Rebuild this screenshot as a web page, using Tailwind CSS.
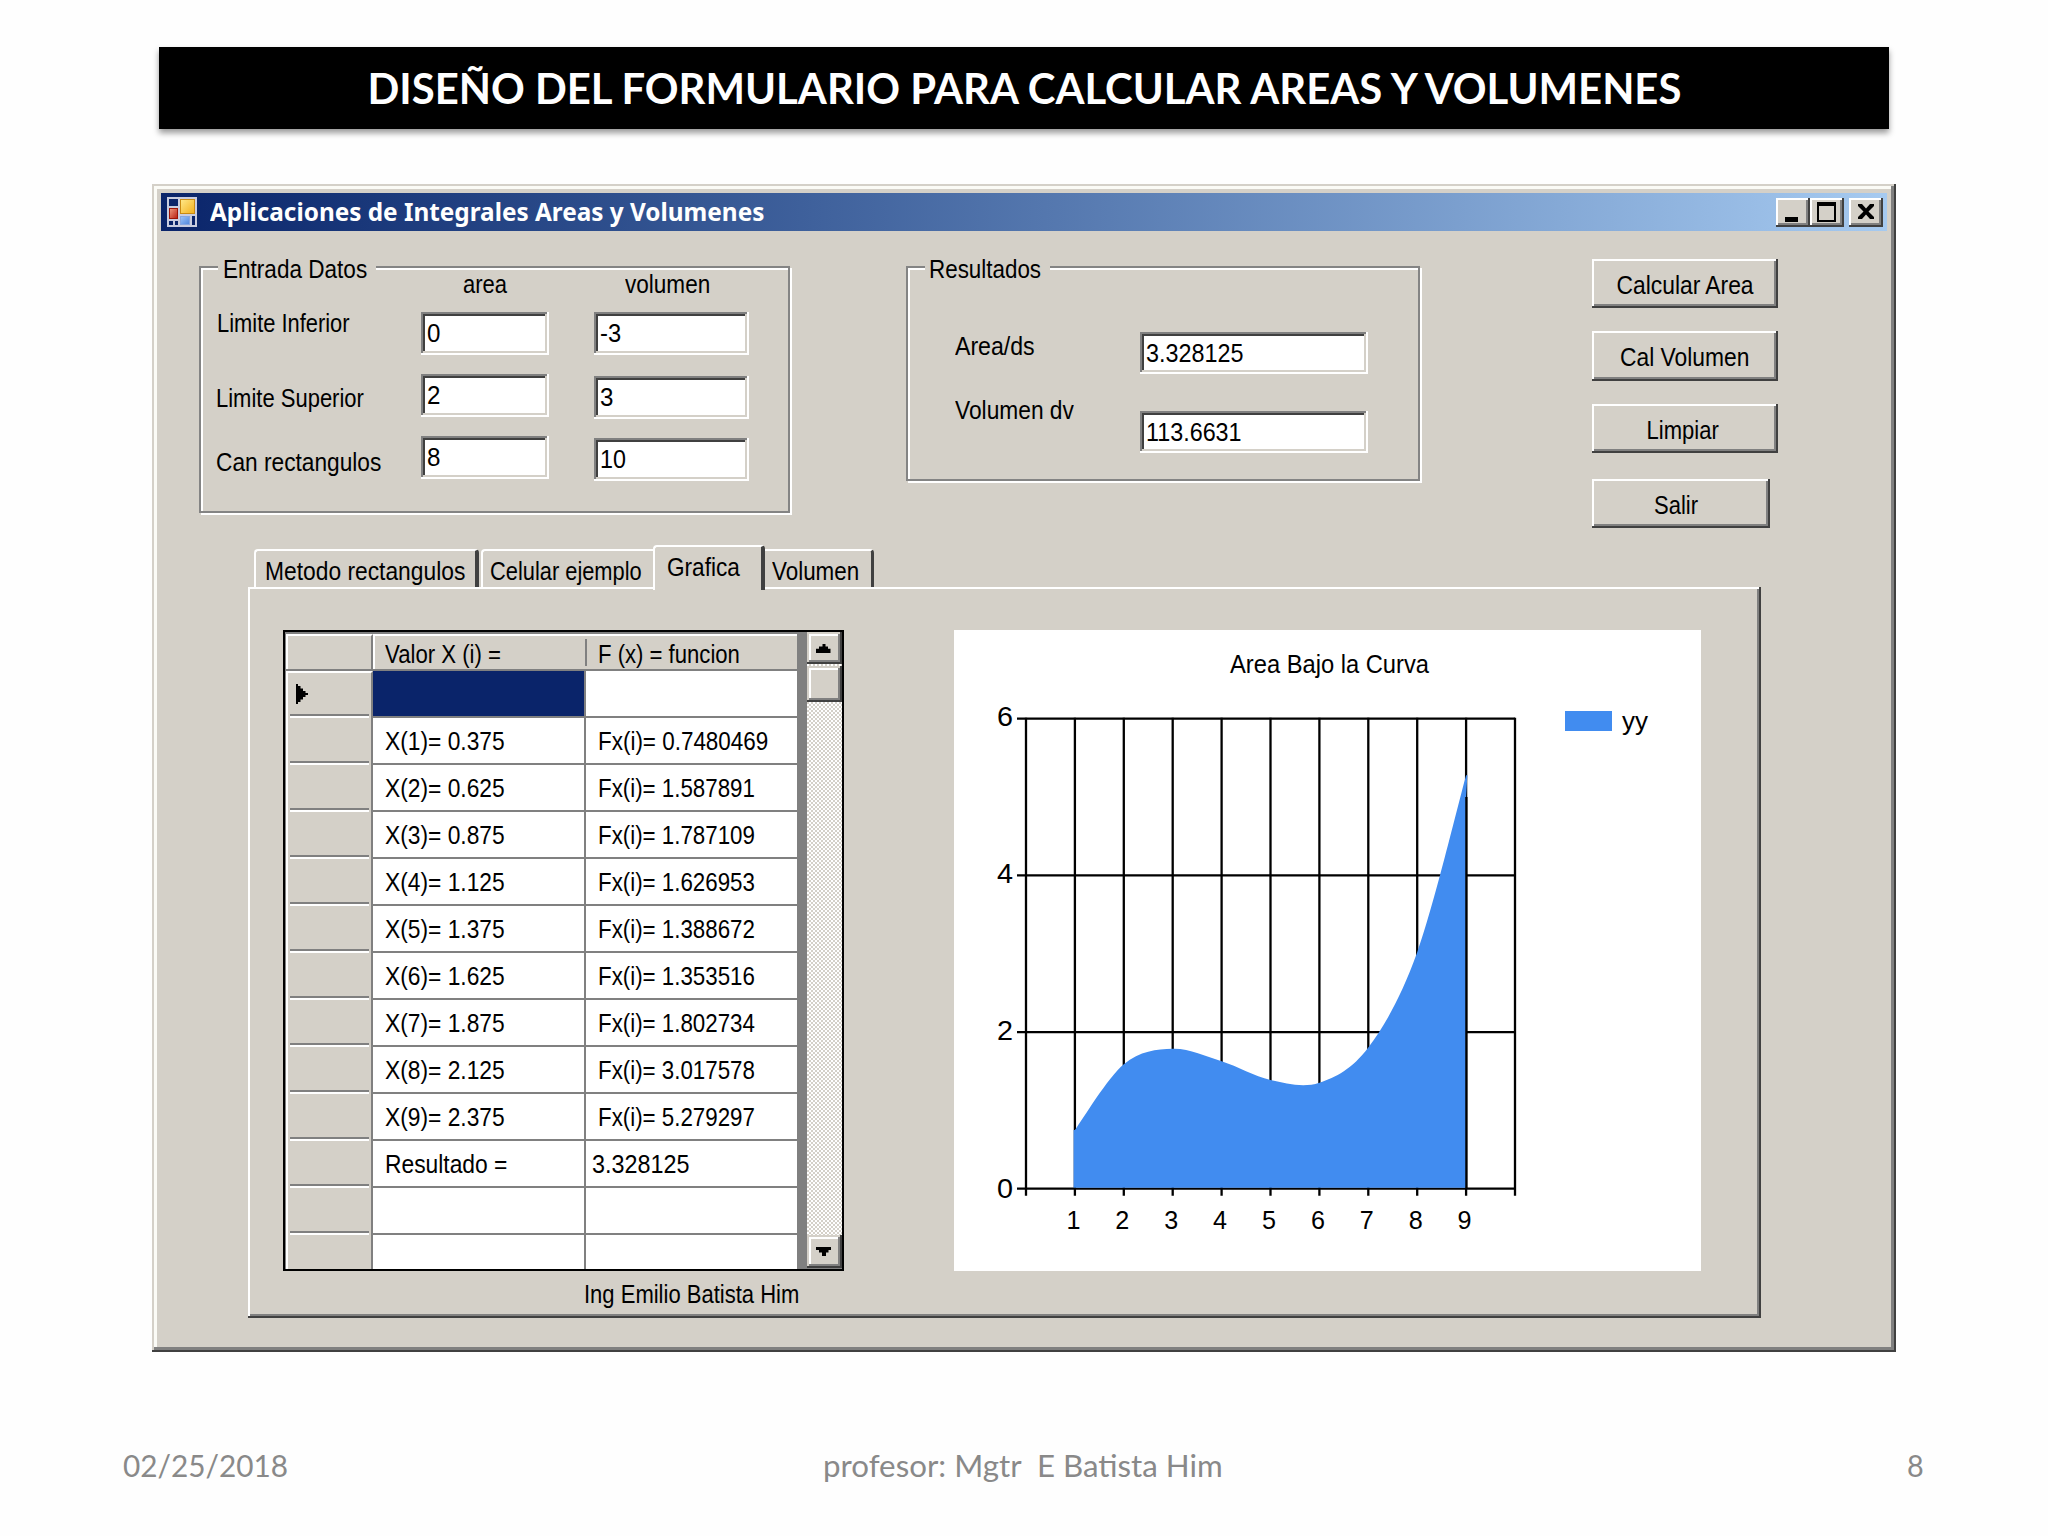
<!DOCTYPE html>
<html lang="es">
<head>
    <meta charset="UTF-8">
    <meta name="viewport" content="width=device-width, initial-scale=1.0">
    <title>Aplicaciones de Integrales Areas y Volumenes</title>
    <script src="https://cdn.jsdelivr.net/npm/@tailwindcss/browser@4"></script>
</head>
<body class="bg-[#fefefe]">
    <div class="w-[2048px] h-[1536px] overflow-hidden flex flex-col font-['Liberation_Sans',sans-serif] text-[26px] leading-[26px] text-black">

        <!-- Slide title -->
        <h1 class="mt-[47px] ml-[159px] w-[1730px] h-[82px] shrink-0 bg-black flex justify-center pt-[20px] shadow-[0_4px_6px_rgba(0,0,0,0.4)] font-['Lato',sans-serif] font-bold text-[42.5px] leading-[42px] text-white">
            <span data-w="1314" class="inline-block whitespace-nowrap">DISEÑO DEL FORMULARIO PARA CALCULAR AREAS Y VOLUMENES</span>
        </h1>

        <!-- Window -->
        <main class="mt-[55px] ml-[152px] w-[1744px] h-[1168px] shrink-0 p-[9px] bg-[#d4d0c8] shadow-[inset_-2px_-2px_#404040,inset_2px_2px_#d4d0c8,inset_-5px_-5px_#808080,inset_5px_5px_#fbfbf6]">
            <header class="w-[1726px] h-[38px] bg-linear-to-r from-[#0a246a] to-[#a6caf0] flex items-center pl-[6px] pr-[4px]">
                <svg class="w-[30px] h-[30px] shrink-0" viewBox="0 0 30 30">
                    <defs>
                        <linearGradient id="gold" x1="0" y1="0" x2="1" y2="1"><stop offset="0" stop-color="#ffe98a"/><stop offset="1" stop-color="#f2b01c"/></linearGradient>
                        <linearGradient id="red" x1="0" y1="0" x2="1" y2="1"><stop offset="0" stop-color="#f09a80"/><stop offset="1" stop-color="#b81d10"/></linearGradient>
                        <linearGradient id="sky" x1="0" y1="0" x2="1" y2="1"><stop offset="0" stop-color="#9cc4fa"/><stop offset="1" stop-color="#4f86dc"/></linearGradient>
                    </defs>
                    <rect width="30" height="30" fill="#c9cde0"/>
                    <rect x="2" y="2" width="9" height="7" fill="#0a246a"/>
                    <rect x="2" y="24" width="4" height="4" fill="#0a246a"/>
                    <rect x="8" y="24" width="3" height="4" fill="#0a246a"/>
                    <rect x="25" y="19" width="3" height="9" fill="#0a246a"/>
                    <rect x="13.5" y="2.5" width="14" height="14" fill="url(#gold)" stroke="#c98a12"/>
                    <rect x="2.5" y="11.5" width="8" height="10" fill="url(#red)" stroke="#9c1408"/>
                    <rect x="13.5" y="19.5" width="9" height="8" fill="url(#sky)" stroke="#86a6e0"/>
                </svg>
                <span data-w="554" class="inline-block ml-[13px] origin-left whitespace-nowrap font-['Noto_Sans',sans-serif] font-bold text-[24.5px] leading-[24px] text-white">Aplicaciones de Integrales Areas y Volumenes</span>
                <div class="ml-auto flex">
                    <button class="w-[34px] h-[29px] bg-[#d4d0c8] shadow-[inset_-2px_-2px_#404040,inset_2px_2px_#fff,inset_-4px_-4px_#808080]">
                        <svg class="w-[34px] h-[29px]" viewBox="0 0 34 29"><rect x="9" y="19" width="13" height="5"/></svg>
                    </button>
                    <button class="w-[34px] h-[29px] bg-[#d4d0c8] shadow-[inset_-2px_-2px_#404040,inset_2px_2px_#fff,inset_-4px_-4px_#808080]">
                        <svg class="w-[34px] h-[29px]" viewBox="0 0 34 29"><path d="M7 4h19v20H7zM9 8v14h15V8z" fill-rule="evenodd"/></svg>
                    </button>
                    <button class="ml-[5px] w-[34px] h-[29px] bg-[#d4d0c8] shadow-[inset_-2px_-2px_#404040,inset_2px_2px_#fff,inset_-4px_-4px_#808080]">
                        <svg class="w-[34px] h-[29px]" viewBox="0 0 34 29"><path d="M9 6h4l4 4.500 4-4.500h4v2l-5.500 5.500 5.500 5.500v2h-4l-4-4.500-4 4.500H9v-2l5.500-5.500L9 8z"/></svg>
                    </button>
                </div>
            </header>

            <section class="h-[314px] flex items-start">
                <!-- Entrada Datos -->
                <fieldset class="mt-[20px] ml-[38px] w-[591px] h-[262px] border-2 border-[#848484] shadow-[2px_2px_#fff,inset_2px_2px_#fff]">
                    <legend class="ml-[17px] w-[158px] h-[31px] pt-[5px] pl-[5px] bg-[#d4d0c8]"><span data-w="144" class="inline-block origin-left whitespace-nowrap">Entrada Datos</span></legend>
                    <div class="-mt-[11px] pl-[16px] flex">
                        <div class="w-[204px] pt-[39px] flex flex-col items-start">
                            <label data-w="133" class="inline-block origin-left whitespace-nowrap">Limite Inferior</label>
                            <label data-w="148" class="inline-block mt-[49px] -ml-px origin-left whitespace-nowrap">Limite Superior</label>
                            <label data-w="165" class="inline-block mt-[38px] -ml-px origin-left whitespace-nowrap">Can rectangulos</label>
                        </div>
                        <div class="w-[173px] flex flex-col items-start">
                            <span data-w="44" class="inline-block ml-[42px] origin-left whitespace-nowrap">area</span>
                            <div class="mt-[15px] w-[128px] h-[43px] pt-[8px] pl-[6px] bg-white shadow-[inset_-2px_-2px_#fff,inset_2px_2px_#808080,inset_-4px_-4px_#d4d0c8,inset_4px_4px_#404040]"><span data-w="13" class="inline-block origin-left">0</span></div>
                            <div class="mt-[19px] w-[128px] h-[43px] pt-[8px] pl-[6px] bg-white shadow-[inset_-2px_-2px_#fff,inset_2px_2px_#808080,inset_-4px_-4px_#d4d0c8,inset_4px_4px_#404040]"><span data-w="13" class="inline-block origin-left">2</span></div>
                            <div class="mt-[19px] w-[128px] h-[43px] pt-[8px] pl-[6px] bg-white shadow-[inset_-2px_-2px_#fff,inset_2px_2px_#808080,inset_-4px_-4px_#d4d0c8,inset_4px_4px_#404040]"><span data-w="13" class="inline-block origin-left">8</span></div>
                        </div>
                        <div class="flex flex-col items-start">
                            <span data-w="85" class="inline-block ml-[31px] origin-left whitespace-nowrap">volumen</span>
                            <div class="mt-[15px] w-[155px] h-[43px] pt-[8px] pl-[6px] bg-white shadow-[inset_-2px_-2px_#fff,inset_2px_2px_#808080,inset_-4px_-4px_#d4d0c8,inset_4px_4px_#404040]"><span data-w="21" class="inline-block origin-left">-3</span></div>
                            <div class="mt-[21px] w-[155px] h-[43px] pt-[8px] pl-[6px] bg-white shadow-[inset_-2px_-2px_#fff,inset_2px_2px_#808080,inset_-4px_-4px_#d4d0c8,inset_4px_4px_#404040]"><span data-w="13" class="inline-block origin-left">3</span></div>
                            <div class="mt-[19px] w-[155px] h-[43px] pt-[8px] pl-[6px] bg-white shadow-[inset_-2px_-2px_#fff,inset_2px_2px_#808080,inset_-4px_-4px_#d4d0c8,inset_4px_4px_#404040]"><span data-w="26" class="inline-block origin-left">10</span></div>
                        </div>
                    </div>
                </fieldset>

                <!-- Resultados -->
                <fieldset class="mt-[20px] ml-[116px] w-[514px] h-[230px] border-2 border-[#848484] shadow-[2px_2px_#fff,inset_2px_2px_#fff]">
                    <legend class="ml-[17px] w-[125px] h-[31px] pt-[5px] pl-[4px] bg-[#d4d0c8]"><span data-w="112" class="inline-block origin-left whitespace-nowrap">Resultados</span></legend>
                    <div class="pl-[47px] flex">
                        <div class="w-[185px] pt-[51px] flex flex-col items-start">
                            <label data-w="80" class="inline-block origin-left whitespace-nowrap">Area/ds</label>
                            <label data-w="119" class="inline-block mt-[38px] origin-left whitespace-nowrap">Volumen dv</label>
                        </div>
                        <div class="pt-[50px]">
                            <div class="w-[228px] h-[42px] pt-[8px] pl-[6px] bg-white shadow-[inset_-2px_-2px_#fff,inset_2px_2px_#808080,inset_-4px_-4px_#d4d0c8,inset_4px_4px_#404040]"><span data-w="97" class="inline-block origin-left">3.328125</span></div>
                            <div class="mt-[37px] w-[228px] h-[42px] pt-[8px] pl-[6px] bg-white shadow-[inset_-2px_-2px_#fff,inset_2px_2px_#808080,inset_-4px_-4px_#d4d0c8,inset_4px_4px_#404040]"><span data-w="96" class="inline-block origin-left">113.6631</span></div>
                        </div>
                    </div>
                </fieldset>

                <!-- Acciones -->
                <div class="mt-[28px] ml-[172px] flex flex-col items-start gap-[23px]">
                    <button class="w-[186px] h-[49px] pt-[2px] flex items-center justify-center bg-[#d4d0c8] shadow-[inset_-2px_-2px_#404040,inset_2px_2px_#fff,inset_-4px_-4px_#808080]"><span data-w="137" class="inline-block whitespace-nowrap">Calcular Area</span></button>
                    <button class="w-[186px] h-[50px] pt-[2px] flex items-center justify-center bg-[#d4d0c8] shadow-[inset_-2px_-2px_#404040,inset_2px_2px_#fff,inset_-4px_-4px_#808080]"><span data-w="129" class="inline-block whitespace-nowrap">Cal Volumen</span></button>
                    <button class="w-[186px] h-[49px] pt-[2px] pr-[4px] flex items-center justify-center bg-[#d4d0c8] shadow-[inset_-2px_-2px_#404040,inset_2px_2px_#fff,inset_-4px_-4px_#808080]"><span data-w="72" class="inline-block whitespace-nowrap">Limpiar</span></button>
                    <button class="mt-[3px] w-[178px] h-[49px] pr-[10px] pt-[2px] flex items-center justify-center bg-[#d4d0c8] shadow-[inset_-2px_-2px_#404040,inset_2px_2px_#fff,inset_-4px_-4px_#808080]"><span data-w="44" class="inline-block whitespace-nowrap">Salir</span></button>
                </div>
            </section>

            <!-- Tabs -->
            <nav class="h-[42px] ml-[93px] flex items-end">
                <div class="w-[225px] h-[38px] pt-[7px] pl-[9px] border-t-2 border-l-2 border-white border-r-4 border-r-[#404040] rounded-t-[4px]"><span data-w="200" class="inline-block origin-left whitespace-nowrap">Metodo rectangulos</span></div>
                <div class="ml-[2px] w-[172px] h-[38px] pt-[7px] pl-[7px] border-t-2 border-l-2 border-white rounded-tl-[4px]"><span data-w="152" class="inline-block origin-left whitespace-nowrap">Celular ejemplo</span></div>
                <div class="relative z-10 w-[112px] h-[45px] -mb-[3px] pt-[7px] pl-[12px] bg-[#d4d0c8] border-t-2 border-l-2 border-white border-r-4 border-r-[#404040] rounded-t-[4px]"><span data-w="73" class="inline-block origin-left whitespace-nowrap">Grafica</span></div>
                <div class="w-[109px] h-[38px] pt-[7px] pl-[7px] border-t-2 border-white border-r-3 border-r-[#404040] rounded-tr-[4px]"><span data-w="87" class="inline-block origin-left whitespace-nowrap">Volumen</span></div>
            </nav>

            <section class="ml-[87px] w-[1513px] h-[731px] pt-[43px] pl-[35px] flex items-start shadow-[inset_-2px_-2px_#404040,inset_2px_2px_#fff,inset_-4px_-4px_#808080]">
                <div class="flex flex-col">
                    <!-- DataGridView -->
                    <div class="w-[561px] h-[641px] overflow-hidden border-[2.5px] border-black bg-[#808080] flex">
                        <div class="w-[512px]">
                            <div class="h-[39px] pt-[2px] border-b-2 border-[#808080] flex">
                                <div class="w-[87px] ml-[1px] border-t-2 border-l-2 border-r-2 border-t-white border-l-white border-r-[#808080] bg-[#d4d0c8]"></div>
                                <div class="w-[425px] border-t-2 border-l-2 border-white bg-[#d4d0c8] flex">
                                    <div class="w-[210px] pt-[5px] pl-[10px]"><span data-w="116" class="inline-block origin-left whitespace-nowrap">Valor X (i) =</span></div>
                                    <div class="my-[3px] w-[2px] bg-[#808080]"></div>
                                    <div class="pt-[5px] pl-[11px]"><span data-w="142" class="inline-block origin-left whitespace-nowrap">F (x) = funcion</span></div>
                                </div>
                            </div>
                            <div id="rows"></div>
                        </div>
                        <div class="ml-[10px] w-[35px] h-[636px] flex flex-col bg-[#fcfcfc] bg-[conic-gradient(#d4d0c8_25%,#fff_0_50%,#d4d0c8_0_75%,#fff_0)] bg-size-[4px_4px]">
                            <div class="h-[32px] bg-[#d4d0c8] shadow-[inset_-2px_-2px_#404040,inset_2px_2px_#d4d0c8,inset_-4px_-4px_#808080,inset_4px_4px_#fff]">
                                <svg class="w-[35px] h-[32px]" viewBox="0 0 35 32"><path d="M15.500 12h3v2.500h2.500v2.200h2.500v4.300H9v-4.300h3v-2.200h3.500z"/></svg>
                            </div>
                            <div class="mt-[2px] h-[36px] bg-[#d4d0c8] shadow-[inset_-2px_-2px_#404040,inset_2px_2px_#d4d0c8,inset_-4px_-4px_#808080,inset_4px_4px_#fff]"></div>
                            <div class="mt-auto h-[33px] bg-[#d4d0c8] shadow-[inset_-2px_-2px_#404040,inset_2px_2px_#d4d0c8,inset_-4px_-4px_#808080,inset_4px_4px_#fff]">
                                <svg class="w-[35px] h-[33px]" viewBox="0 0 35 33"><path d="M9 12h15v3h-2.500v2.500H19V21h-4v-3.500h-3V15H9z"/></svg>
                            </div>
                        </div>
                    </div>
                    <p class="mt-[10px] ml-[301px]"><span data-w="215" class="inline-block origin-left whitespace-nowrap">Ing Emilio Batista Him</span></p>
                </div>

                <!-- Chart -->
                <svg id="chart" class="ml-auto mr-[60px] w-[747px] h-[641px] bg-white shrink-0" viewBox="0 0 747 641"></svg>
            </section>
        </main>

        <!-- Slide footer -->
        <footer class="mt-[98px] ml-[123px] flex font-['Lato',sans-serif] text-[30.5px] leading-[30px] text-[#898989]">
            <div class="w-[700px]"><span data-w="165" class="inline-block origin-left whitespace-nowrap">02/25/2018</span></div>
            <div class="w-[1084px]"><span data-w="400" class="inline-block origin-left whitespace-pre">profesor: Mgtr  E Batista Him</span></div>
            <div><span data-w="17" class="inline-block origin-left">8</span></div>
        </footer>
    </div>

    <script>
        const rows = [
            ['', ''],
            ['X(1)= 0.375', 'Fx(i)= 0.7480469'],
            ['X(2)= 0.625', 'Fx(i)= 1.587891'],
            ['X(3)= 0.875', 'Fx(i)= 1.787109'],
            ['X(4)= 1.125', 'Fx(i)= 1.626953'],
            ['X(5)= 1.375', 'Fx(i)= 1.388672'],
            ['X(6)= 1.625', 'Fx(i)= 1.353516'],
            ['X(7)= 1.875', 'Fx(i)= 1.802734'],
            ['X(8)= 2.125', 'Fx(i)= 3.017578'],
            ['X(9)= 2.375', 'Fx(i)= 5.279297'],
            ['Resultado =', '3.328125'],
            ['', ''],
            ['', '']
        ];

        function renderRows() {
            document.getElementById('rows').innerHTML = rows.map(([x, fx], i) => {
                const isResult = x.startsWith('Res');
                const fxWidth = isResult ? 97 : (i === 1 ? 170 : 157);
                return `<div class="h-[47px] flex">
                    <div class="ml-[1px] w-[87px] border-l-2 border-r-2 border-l-white border-r-[#808080] bg-[#d4d0c8] flex flex-col ${i === 0 ? 'border-t-2 border-t-white' : ''}">
                        ${i === 0 ? '<svg class="absolute w-[12px] h-[20px] mt-[11px] ml-[8px]" viewBox="0 0 12 20"><path d="M0 0h2v2h2.500v2.500H7V7h2.500v2H12v2H9.500v2H7v2.500H4.500V18H2v2H0z"/></svg>' : ''}
                        <div class="mt-auto mx-[2px] h-[4px] bg-[#808080] border-b-2 border-white"></div>
                    </div>
                    <div class="w-[213px] border-r-2 border-b-2 border-[#808080] pt-[10px] pl-[12px] ${i === 0 ? 'bg-[#0a246a]' : 'bg-white'}">
                        <span data-w="${isResult ? 122 : 120}" class="inline-block origin-left whitespace-nowrap">${x}</span>
                    </div>
                    <div class="w-[211px] border-b-2 border-[#808080] bg-white pt-[10px] ${isResult ? 'pl-[6px]' : 'pl-[12px]'}">
                        <span data-w="${fxWidth}" class="inline-block origin-left whitespace-nowrap">${fx}</span>
                    </div>
                </div>`;
            }).join('');
        }

        function renderChart() {
            const values = [0.7480469, 1.587891, 1.787109, 1.626953, 1.388672, 1.353516, 1.802734, 3.017578, 5.279297];
            const left = 72, step = 48.9, top = 88.7, bottom = 558.7;
            const px = i => left + step * i;
            const py = v => bottom - (bottom - top) * v / 6;
            const line = (x1, y1, x2, y2) => `<line x1="${x1}" y1="${y1}" x2="${x2}" y2="${y2}" stroke="#000" stroke-width="2.3"/>`;
            const text = (x, y, w, t, size = 26) => `<text x="${x}" y="${y}" textLength="${w}" lengthAdjust="spacingAndGlyphs" font-size="${size}">${t}</text>`;

            let svg = '';
            for (let i = 0; i <= 10; i++) svg += line(px(i), top - 1, px(i), bottom + 7);
            for (let v = 0; v <= 6; v += 2) svg += line(left - 9, py(v), px(10), py(v));

            // cardinal spline through the points
            const p = values.map((v, i) => [px(i + 1), py(v)]);
            const at = i => p[Math.max(0, Math.min(p.length - 1, i))];
            const x0 = p[0][0] - 1.3;
            let d = `M${x0} ${bottom - 1}L${x0} ${p[0][1]}L${p[0]}`;
            for (let i = 0; i < p.length - 1; i++) {
                const c1 = [0, 1].map(k => at(i)[k] + (at(i + 1)[k] - at(i - 1)[k]) / 6);
                const c2 = [0, 1].map(k => at(i + 1)[k] - (at(i + 2)[k] - at(i)[k]) / 6);
                d += `C${c1} ${c2} ${at(i + 1)}`;
            }
            svg += `<path d="${d}h1.3L${px(9)} ${py(5)}V${bottom - 1}Z" fill="#418cf0"/>`;
            svg += line(px(9) + 0.3, py(5.0), px(9) + 0.3, bottom);

            for (let i = 1; i <= 9; i++) svg += text(px(i) - 8.5, 599, 14, i);
            [[6, 96], [4, 253], [2, 410], [0, 568]].forEach(([v, y]) => svg += text(43, y, 16, v, 28));
            svg += text(276, 43, 199, 'Area Bajo la Curva');
            svg += '<rect x="611" y="81" width="47" height="20" fill="#418cf0"/>';
            svg += text(668, 100, 26, 'yy');
            document.getElementById('chart').innerHTML = svg;
        }

        // Squeeze each label to its own width, again whenever its natural size changes
        const fitter = new ResizeObserver(entries => {
            entries.forEach(({ target }) => {
                if (!target.offsetWidth) return;
                target.style.transform = `scaleX(${target.dataset.w / target.offsetWidth})`;
            });
        });

        renderRows();
        renderChart();
        document.querySelectorAll('[data-w]').forEach(el => fitter.observe(el));
    </script>
</body>
</html>
